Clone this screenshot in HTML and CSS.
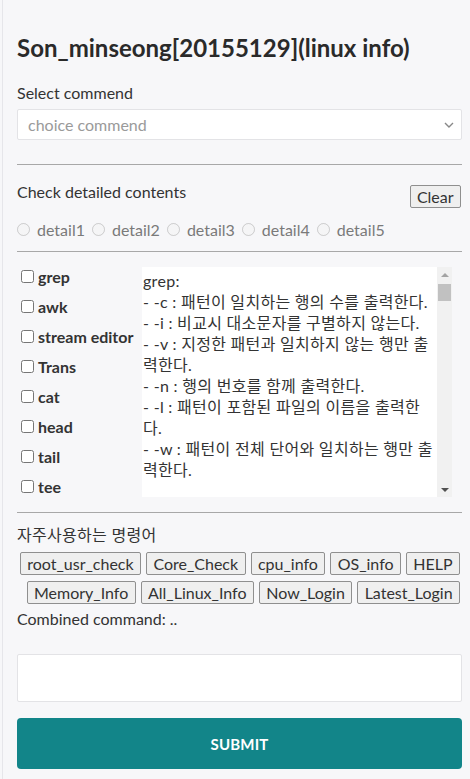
FILE: index.html
```html
<!DOCTYPE html>
<html lang="ko">
<head>
<meta charset="utf-8">
<title>linux info</title>
<link rel="stylesheet" href="styles.css">
</head>
<body>
<main class="page">
  <h1 class="title">Son_minseong[20155129](linux info)</h1>

  <label class="field-label" for="cmd">Select commend</label>
  <div class="select-wrap">
    <select id="cmd" class="select">
      <option>choice commend</option>
    </select>
    <svg class="select-arrow" width="10" height="6" viewBox="0 0 10 6"><path d="M1 1l4 4 4-4" fill="none" stroke="#888" stroke-width="1.4"/></svg>
  </div>

  <hr class="rule rule-1">

  <div class="detail-head">
    <span class="field-label">Check detailed contents</span>
    <button class="btn clear">Clear</button>
  </div>
  <div class="radios">
    <label class="radio"><input type="radio" name="d" disabled><span>detail1</span></label>
    <label class="radio"><input type="radio" name="d" disabled><span>detail2</span></label>
    <label class="radio"><input type="radio" name="d" disabled><span>detail3</span></label>
    <label class="radio"><input type="radio" name="d" disabled><span>detail4</span></label>
    <label class="radio"><input type="radio" name="d" disabled><span>detail5</span></label>
  </div>

  <hr class="rule rule-2">

  <div class="commands">
    <ul class="checks">
      <li><label><input type="checkbox"><span>grep</span></label></li>
      <li><label><input type="checkbox"><span>awk</span></label></li>
      <li><label><input type="checkbox"><span>stream editor</span></label></li>
      <li><label><input type="checkbox"><span>Trans</span></label></li>
      <li><label><input type="checkbox"><span>cat</span></label></li>
      <li><label><input type="checkbox"><span>head</span></label></li>
      <li><label><input type="checkbox"><span>tail</span></label></li>
      <li><label><input type="checkbox"><span>tee</span></label></li>
    </ul>
    <div class="info-box">
      <textarea class="info" readonly>grep:
- -c : 패턴이 일치하는 행의 수를 출력한다.
- -i : 비교시 대소문자를 구별하지 않는다.
- -v : 지정한 패턴과 일치하지 않는 행만 출
력한다.
- -n : 행의 번호를 함께 출력한다.
- -l : 패턴이 포함된 파일의 이름을 출력한
다.
- -w : 패턴이 전체 단어와 일치하는 행만 출
력한다.

awk:
- -F : 필드 구분 문자를 지정한다.
- -f : 스크립트 파일을 지정한다.
- -v : 변수에 값을 지정한다.
- print : 지정한 필드를 출력한다.
- NR : 현재 레코드 번호를 나타낸다.
- NF : 현재 레코드의 필드 수를 나타낸다.

stream editor (sed):
- -n : 패턴 스페이스를 자동으로 출력하지
않는다.
- -e : 실행할 스크립트를 지정한다.
- -f : 스크립트 파일을 지정한다.
- -i : 파일을 직접 수정한다.
- s : 문자열을 치환한다.
- d : 행을 삭제한다.
- p : 행을 출력한다.

Trans (tr):
- -d : 지정한 문자를 삭제한다.
- -s : 연속된 문자를 하나로 줄인다.
- -c : 지정한 문자 외의 문자를 대상으로
한다.

cat:
- -n : 모든 행에 번호를 붙인다.
- -b : 비어있지 않은 행에 번호를 붙인다.
- -s : 연속된 빈 행을 하나로 줄인다.

head:
- -n : 출력할 행의 수를 지정한다.
- -c : 출력할 바이트 수를 지정한다.

tail:
- -n : 출력할 행의 수를 지정한다.
- -f : 파일의 내용이 추가되면 계속 출력한
다.

tee:
- -a : 파일에 덮어쓰지 않고 추가한다.
- -i : 인터럽트 신호를 무시한다.</textarea>
      <div class="scrollbar" aria-hidden="true">
        <span class="sb-btn sb-up"></span>
        <span class="sb-track"><span class="sb-thumb"></span></span>
        <span class="sb-btn sb-down"></span>
      </div>
    </div>
  </div>

  <hr class="rule rule-3">

  <p class="freq-title">자주사용하는 명령어</p>
  <div class="quick">
    <button class="btn">root_usr_check</button>
    <button class="btn">Core_Check</button>
    <button class="btn">cpu_info</button>
    <button class="btn">OS_info</button>
    <button class="btn">HELP</button>
    <button class="btn">Memory_Info</button>
    <button class="btn">All_Linux_Info</button>
    <button class="btn">Now_Login</button>
    <button class="btn">Latest_Login</button>
  </div>
  <p class="combined">Combined command: ..</p>

  <input class="text-input" type="text">
  <button class="submit">SUBMIT</button>
</main>
</body>
</html>
```

FILE: styles.css
```css
* { box-sizing: border-box; }

html, body {
  margin: 0;
  padding: 0;
  background: #f7f7f9;
}

body {
  font-family: "Lato", "Noto Sans CJK KR", sans-serif;
  color: #333;
  font-size: 16px;
  border-left: 1px solid #e6e6ea;
  margin-left: 2px;
  min-height: 779px;
}

.page {
  padding: 33px 8px 0 14px;
}

.title {
  margin: 0;
  font-size: 24px;
  line-height: 29px;
  font-weight: 700;
  color: #2a2a2a;
}

.field-label {
  display: block;
  font-size: 16px;
  line-height: 20px;
  color: #333;
}

.title + .field-label {
  margin-top: 21px;
}

.select-wrap {
  position: relative;
  margin-top: 6px;
}

.select {
  display: block;
  width: 100%;
  height: 31px;
  border: 1px solid #e3e3e6;
  border-radius: 2px;
  background: #fff;
  font-family: inherit;
  font-size: 16px;
  color: #9a9a9a;
  padding: 0 10px;
  appearance: none;
  -webkit-appearance: none;
}

.select-arrow {
  position: absolute;
  right: 8px;
  top: 13px;
}

.rule {
  border: 0;
  border-top: 1px solid #a8a8a8;
  margin: 0;
}

.rule-1 { margin-top: 24px; }

.detail-head {
  display: flex;
  justify-content: space-between;
  align-items: flex-start;
  margin-top: 17px;
}

.btn {
  font-family: inherit;
  font-size: 16px;
  line-height: 19px;
  color: #333;
  background: #efefef;
  border: 1px solid #8f8f8f;
  border-radius: 2px;
  padding: 1px 6.4px;
  margin: 0;
}

.clear {
  margin-top: 3px;
  margin-right: 1px;
}

.radios {
  display: flex;
  margin-top: 10px;
  height: 22px;
  align-items: center;
}

.radio {
  display: inline-flex;
  align-items: center;
  margin-right: 7px;
  color: #7a7a7a;
  font-size: 16px;
}

.radio input {
  margin: 0 7px 0 0;
  width: 13px;
  height: 13px;
}

.rule-2 { margin-top: 11px; }

.commands {
  display: flex;
  margin-top: 15px;
}

.checks {
  list-style: none;
  margin: -6px 0 0 0;
  padding: 0;
  width: 125px;
  flex: none;
}

.checks li {
  height: 30px;
  display: flex;
  align-items: center;
}

.checks label {
  display: flex;
  align-items: center;
  font-weight: 700;
  font-size: 16px;
  color: #333;
  white-space: nowrap;
}

.checks input {
  margin: 0 4px 0 4px;
  width: 13px;
  height: 13px;
}

.info-box {
  display: flex;
  width: 310px;
  height: 230px;
  background: #fff;
}

.info {
  display: block;
  flex: 1;
  height: 100%;
  border: 0;
  background: #fff;
  padding: 3px 0 2px 1px;
  margin: 0;
  resize: none;
  font-family: "Lato", "Noto Sans CJK KR", sans-serif;
  font-size: 16px;
  line-height: 21px;
  letter-spacing: 0.3px;
  color: #333;
  white-space: pre;
  overflow: hidden;
  outline: none;
}

.scrollbar {
  width: 15px;
  flex: none;
  display: flex;
  flex-direction: column;
  background: #f1f1f1;
}

.sb-btn {
  height: 15px;
  flex: none;
  display: flex;
  align-items: center;
  justify-content: center;
}

.sb-btn::before {
  content: "";
  width: 0;
  height: 0;
  border-left: 4px solid transparent;
  border-right: 4px solid transparent;
}

.sb-up::before {
  border-bottom: 4px solid #a3a3a3;
}

.sb-down::before {
  border-top: 4px solid #505050;
}

.sb-track {
  flex: 1;
  padding: 2px 1px 0 1px;
}

.sb-thumb {
  display: block;
  height: 17px;
  background: #c1c1c1;
}

.rule-3 { margin-top: 11px; }

.freq-title {
  margin: 12px 0 0 0;
  font-size: 16px;
  line-height: 20px;
  letter-spacing: 0.3px;
}

.quick {
  display: flex;
  flex-wrap: wrap;
  justify-content: flex-end;
  gap: 6px 5px;
  margin-top: 7px;
  padding: 0 2px 0 0;
}

.combined {
  margin: 5px 0 0 0;
  font-size: 16px;
  line-height: 20px;
}

.text-input {
  display: block;
  width: 100%;
  height: 48px;
  margin-top: 25px;
  border: 1px solid #e3e3e6;
  background: #fff;
  border-radius: 2px;
}

.submit {
  display: block;
  width: 100%;
  height: 51px;
  margin-top: 16px;
  border: 0;
  border-radius: 4px;
  background: #128589;
  color: #fff;
  font-family: inherit;
  font-weight: 700;
  font-size: 15px;
  letter-spacing: 0.2px;
}
```
